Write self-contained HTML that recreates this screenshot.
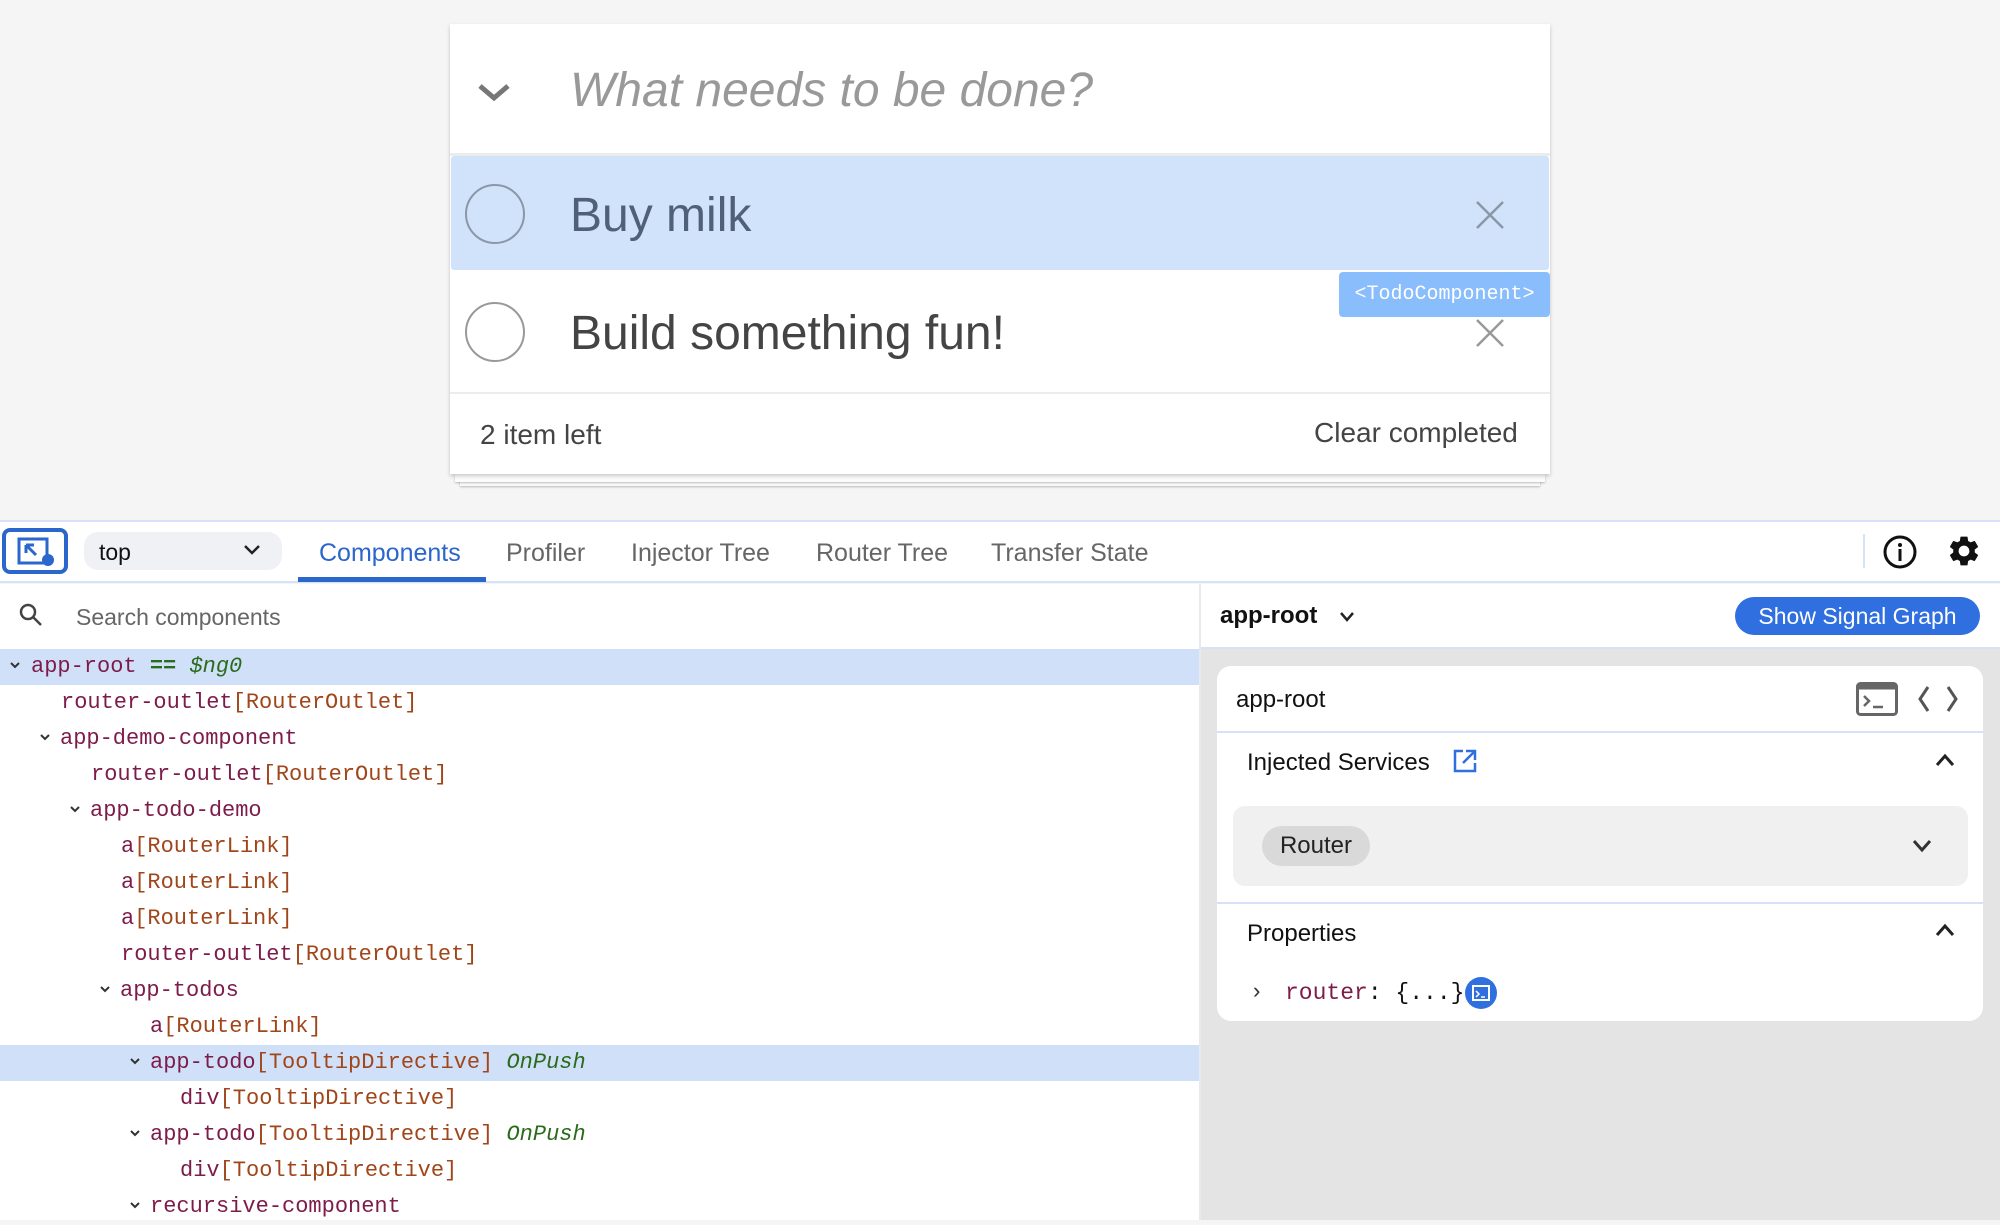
<!DOCTYPE html>
<html><head><meta charset="utf-8"><style>
*{box-sizing:border-box;margin:0;padding:0}
body{width:2000px;height:1220px;overflow:hidden;background:#f5f5f5;font-family:"Liberation Sans",sans-serif;position:relative}
.a{position:absolute}
.mono{font-family:"Liberation Mono","DejaVu Sans Mono",monospace}
.tag{color:#7d1b4a}.att{color:#a0461a}.grn{color:#2a6b1c;font-style:italic}
.row{position:absolute;height:36px;line-height:36px;font-size:22px;white-space:pre}
.cv{position:absolute;width:12px;height:10px}
</style></head><body>
<!-- todo app -->
<div class="a" style="left:460px;top:474px;width:1080px;height:12px;background:#fafafa;box-shadow:0 1px 2px rgba(0,0,0,.25)"></div>
<div class="a" style="left:455px;top:474px;width:1090px;height:8px;background:#fcfcfc;box-shadow:0 1px 2px rgba(0,0,0,.25)"></div>
<div class="a" style="left:450px;top:24px;width:1100px;height:450px;background:#fff;box-shadow:0 2px 4px rgba(0,0,0,.2)"></div>
<svg class="a" style="left:476px;top:80px" width="36" height="24"><path d="M4 6 L18 18 L32 6" stroke="#777" stroke-width="5" fill="none"/></svg>
<div class="a" style="left:570px;top:63px;font-size:48px;font-style:italic;color:#999">What needs to be done?</div>
<div class="a" style="left:450px;top:153px;width:1100px;height:3px;background:#ececec"></div>
<div class="a" style="left:451px;top:156px;width:1098px;height:114px;background:#d1e3fb;border-radius:3px"></div>
<div class="a" style="left:465px;top:184px;width:60px;height:60px;border:2px solid #8a97a6;border-radius:50%"></div>
<div class="a" style="left:570px;top:188px;font-size:48px;color:#4f6078">Buy milk</div>
<svg class="a" style="left:1474px;top:199px" width="32" height="32"><path d="M3 3L29 29M29 3L3 29" stroke="#8a97a6" stroke-width="2.5"/></svg>
<div class="a" style="left:465px;top:302px;width:60px;height:60px;border:2px solid #999;border-radius:50%"></div>
<div class="a" style="left:570px;top:306px;font-size:48px;color:#444">Build something fun!</div>
<svg class="a" style="left:1474px;top:317px" width="32" height="32"><path d="M3 3L29 29M29 3L3 29" stroke="#999" stroke-width="2.5"/></svg>
<div class="a mono" style="left:1339px;top:272px;width:211px;height:45px;background:#8abdfb;border-radius:4px;color:#fff;font-size:20px;line-height:45px;text-align:center">&lt;TodoComponent&gt;</div>
<div class="a" style="left:450px;top:392px;width:1100px;height:2px;background:#ececec"></div>
<div class="a" style="left:480px;top:419px;font-size:28px;color:#444">2 item left</div>
<div class="a" style="left:1314px;top:417px;font-size:28px;color:#444">Clear completed</div>

<!-- toolbar -->
<div class="a" style="left:0;top:520px;width:2000px;height:63px;background:#fff;border-top:2px solid #d6e2f7;border-bottom:2px solid #d6e2f7"></div>
<div class="a" style="left:2px;top:528px;width:66px;height:46px;border:4px solid #2b66cc;border-radius:8px"></div>
<svg class="a" style="left:16px;top:536px" width="40" height="32"><rect x="3" y="3" width="28" height="24" fill="none" stroke="#2b66cc" stroke-width="3"/><path d="M10 9 L10 17 M10 9 L18 9 M10 9 L20 19" stroke="#2b66cc" stroke-width="3"/><circle cx="32" cy="24" r="6" fill="#2b66cc"/></svg>
<div class="a" style="left:84px;top:532px;width:198px;height:38px;background:#eff1f4;border-radius:14px"></div>
<div class="a" style="left:99px;top:539px;font-size:23px;color:#111">top</div>
<svg class="a" style="left:242px;top:542px" width="20" height="16"><path d="M3 4L10 11L17 4" stroke="#222" stroke-width="2.5" fill="none"/></svg>
<div class="a" style="left:319px;top:539px;font-size:25px;color:#2b66cc">Components</div>
<div class="a" style="left:298px;top:577px;width:188px;height:5px;background:#2b66cc"></div>
<div class="a" style="left:506px;top:539px;font-size:25px;color:#666">Profiler</div>
<div class="a" style="left:631px;top:539px;font-size:25px;color:#666">Injector Tree</div>
<div class="a" style="left:816px;top:539px;font-size:25px;color:#666">Router Tree</div>
<div class="a" style="left:991px;top:539px;font-size:25px;color:#666">Transfer State</div>
<div class="a" style="left:1863px;top:534px;width:2px;height:34px;background:#d6e2f7"></div>
<svg class="a" style="left:1882px;top:534px" width="36" height="36"><circle cx="18" cy="18" r="15" fill="none" stroke="#111" stroke-width="3"/><circle cx="18" cy="11" r="2" fill="#111"/><rect x="16.5" y="15" width="3" height="12" fill="#111"/></svg>
<svg class="a" style="left:1946px;top:533px" width="36" height="36" viewBox="0 0 24 24"><path fill="#111" d="M19.14 12.94c.04-.3.06-.61.06-.94 0-.32-.02-.64-.07-.94l2.030-1.58a.49.49 0 0 0 .12-.61l-1.92-3.32a.488.488 0 0 0-.59-.22l-2.39.96c-.5-.38-1.03-.7-1.62-.94l-.36-2.54a.484.484 0 0 0-.48-.41h-3.840c-.24 0-.43.17-.47.41l-.36 2.54c-.59.24-1.13.57-1.62.94l-2.39-.96c-.22-.08-.47 0-.59.22L2.74 8.87c-.12.21-.08.47.12.61l2.03 1.58c-.05.3-.09.63-.09.94s.02.64.07.94l-2.03 1.58a.49.49 0 0 0-.12.61l1.92 3.32c.12.22.37.29.59.22l2.39-.96c.5.38 1.03.7 1.62.94l.36 2.54c.05.24.24.41.48.41h3.84c.24 0 .44-.17.47-.41l.36-2.54c.59-.24 1.13-.56 1.62-.94l2.39.96c.22.08.47 0 .59-.22l1.92-3.32c.12-.22.07-.47-.12-.61l-2.01-1.58zM12 15.6c-1.98 0-3.6-1.62-3.6-3.6s1.62-3.6 3.6-3.6 3.6 1.62 3.6 3.6-1.62 3.6-3.6 3.6z"/></svg>

<!-- left panel -->
<div class="a" style="left:0;top:584px;width:1199px;height:636px;background:#fff"></div>
<div class="a" style="left:1199px;top:584px;width:2px;height:636px;background:#e6eaf0"></div>
<svg class="a" style="left:18px;top:602px" width="26" height="26"><circle cx="10" cy="10" r="7" fill="none" stroke="#444" stroke-width="2.5"/><path d="M15 15L23 23" stroke="#444" stroke-width="2.5"/></svg>
<div class="a" style="left:76px;top:604px;font-size:23px;color:#666">Search components</div>
<div class="a" style="left:0;top:649px;width:1199px;height:36px;background:#d1e0f9"></div>
<div class="a" style="left:0;top:1045px;width:1199px;height:36px;background:#d1e0f9"></div>
<svg class="a" style="left:0;top:649px" width="200" height="572">
<g stroke="#333" stroke-width="2" fill="none">
<path d="M11 14l4 4 4-4"/>
<path d="M41 86l4 4 4-4"/>
<path d="M71 158l4 4 4-4"/>
<path d="M101 338l4 4 4-4"/>
<path d="M131 410l4 4 4-4"/>
<path d="M131 482l4 4 4-4"/>
<path d="M131 554l4 4 4-4"/>
</g></svg>
<div class="mono">
<div class="row" style="top:649px;left:31px"><span class="tag">app-root</span> <span class="grn" style="font-style:normal;font-weight:bold">==</span> <span class="grn">$ng0</span></div>
<div class="row" style="top:685px;left:61px"><span class="tag">router-outlet</span><span class="att">[RouterOutlet]</span></div>
<div class="row" style="top:721px;left:60px"><span class="tag">app-demo-component</span></div>
<div class="row" style="top:757px;left:91px"><span class="tag">router-outlet</span><span class="att">[RouterOutlet]</span></div>
<div class="row" style="top:793px;left:90px"><span class="tag">app-todo-demo</span></div>
<div class="row" style="top:829px;left:121px"><span class="tag">a</span><span class="att">[RouterLink]</span></div>
<div class="row" style="top:865px;left:121px"><span class="tag">a</span><span class="att">[RouterLink]</span></div>
<div class="row" style="top:901px;left:121px"><span class="tag">a</span><span class="att">[RouterLink]</span></div>
<div class="row" style="top:937px;left:121px"><span class="tag">router-outlet</span><span class="att">[RouterOutlet]</span></div>
<div class="row" style="top:973px;left:120px"><span class="tag">app-todos</span></div>
<div class="row" style="top:1009px;left:150px"><span class="tag">a</span><span class="att">[RouterLink]</span></div>
<div class="row" style="top:1045px;left:150px"><span class="tag">app-todo</span><span class="att">[TooltipDirective]</span> <span class="grn">OnPush</span></div>
<div class="row" style="top:1081px;left:180px"><span class="tag">div</span><span class="att">[TooltipDirective]</span></div>
<div class="row" style="top:1117px;left:150px"><span class="tag">app-todo</span><span class="att">[TooltipDirective]</span> <span class="grn">OnPush</span></div>
<div class="row" style="top:1153px;left:180px"><span class="tag">div</span><span class="att">[TooltipDirective]</span></div>
<div class="row" style="top:1189px;left:150px"><span class="tag">recursive-component</span></div>
</div>

<!-- right panel -->
<div class="a" style="left:1201px;top:584px;width:799px;height:636px;background:#e4e4e4"></div>
<div class="a" style="left:1201px;top:584px;width:799px;height:65px;background:#fff;border-bottom:2px solid #d6e2f7"></div>
<div class="a" style="left:1220px;top:602px;font-size:24px;font-weight:bold;color:#111">app-root</div>
<svg class="a" style="left:1338px;top:610px" width="18" height="14"><path d="M3 3L9 10L15 3" stroke="#222" stroke-width="2.5" fill="none"/></svg>
<div class="a" style="left:1735px;top:597px;width:245px;height:38px;background:#2f6fe0;border-radius:19px;color:#fff;font-size:23px;line-height:38px;text-align:center">Show Signal Graph</div>
<div class="a" style="left:1217px;top:666px;width:766px;height:355px;background:#fff;border-radius:14px"></div>
<div class="a" style="left:1236px;top:686px;font-size:24px;color:#111">app-root</div>
<svg class="a" style="left:1856px;top:682px" width="42" height="34"><rect x="1.5" y="1.5" width="39" height="31" rx="3" fill="none" stroke="#666" stroke-width="3"/><rect x="1.5" y="1.5" width="39" height="6" fill="#666"/><path d="M8 14L13 19L8 24M17 25H27" stroke="#666" stroke-width="2.5" fill="none"/></svg>
<svg class="a" style="left:1916px;top:684px" width="44" height="30"><path d="M12 3L4 15L12 27M32 3L40 15L32 27" stroke="#555" stroke-width="3" fill="none"/></svg>
<div class="a" style="left:1217px;top:731px;width:766px;height:2px;background:#d6e2f7"></div>
<div class="a" style="left:1247px;top:749px;font-size:24px;color:#111">Injected Services</div>
<svg class="a" style="left:1452px;top:748px" width="26" height="26"><path d="M11 3H3V23H23V15" stroke="#2f6fe0" stroke-width="2.5" fill="none"/><path d="M14 3H23V12M23 3L11 15" stroke="#2f6fe0" stroke-width="2.5" fill="none"/></svg>
<svg class="a" style="left:1934px;top:752px" width="22" height="16"><path d="M3 13L11 4L19 13" stroke="#222" stroke-width="3" fill="none"/></svg>
<div class="a" style="left:1233px;top:806px;width:735px;height:80px;background:#f0f0f0;border-radius:12px"></div>
<div class="a" style="left:1262px;top:826px;height:40px;background:#d9d9d9;border-radius:20px;width:108px;font-size:24px;line-height:40px;text-align:center;color:#222">Router</div>
<svg class="a" style="left:1911px;top:838px" width="22" height="16"><path d="M3 3L11 12L19 3" stroke="#333" stroke-width="3" fill="none"/></svg>
<div class="a" style="left:1217px;top:902px;width:766px;height:2px;background:#d6e2f7"></div>
<div class="a" style="left:1247px;top:920px;font-size:24px;color:#111">Properties</div>
<svg class="a" style="left:1934px;top:922px" width="22" height="16"><path d="M3 13L11 4L19 13" stroke="#222" stroke-width="3" fill="none"/></svg>
<div class="a mono" style="left:1250px;top:980px;font-size:22px;color:#333">›</div>
<div class="a mono" style="left:1285px;top:980px;font-size:23px;color:#111"><span class="tag">router</span>: {...}</div>
<div class="a" style="left:1465px;top:977px;width:32px;height:32px;border-radius:50%;background:#2f6fe0"></div>
<svg class="a" style="left:1472px;top:985px" width="18" height="16"><rect x="1" y="1" width="16" height="14" fill="none" stroke="#fff" stroke-width="2"/><path d="M4 6L7 9L4 12M9 12H13" stroke="#fff" stroke-width="1.5" fill="none"/></svg>
</body></html>
